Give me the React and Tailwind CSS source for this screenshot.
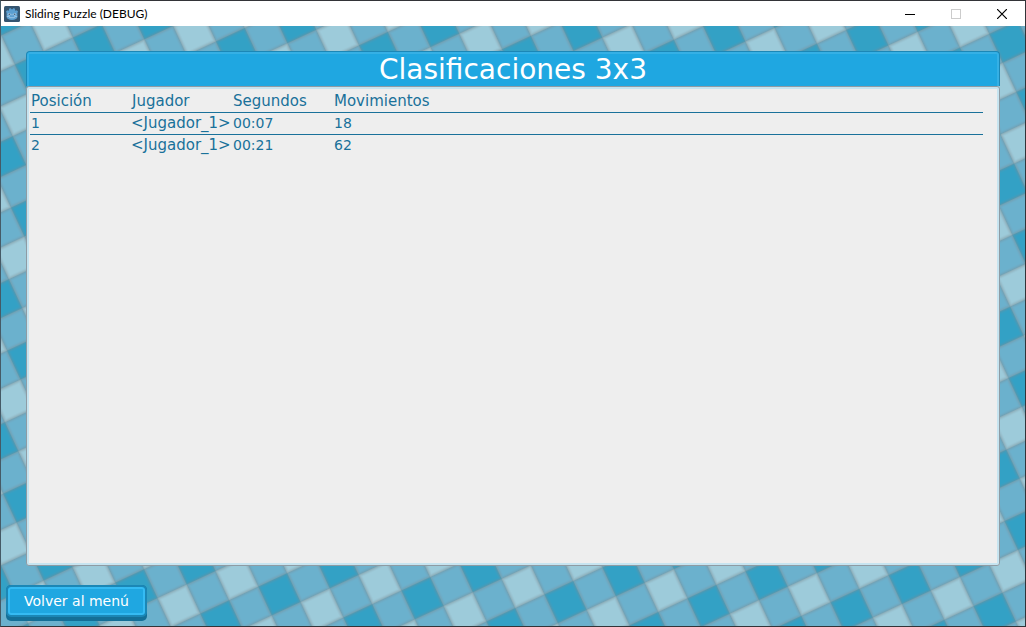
const rows = [
  { position: '1', player: '<Jugador_1>', time: '00:07', moves: '18' },
  { position: '2', player: '<Jugador_1>', time: '00:21', moves: '62' },
];

const columns = ['Posición', 'Jugador', 'Segundos', 'Movimientos'];

function CheckeredBackground() {
  const grid = 'M0 0H64M0 32H64M0 64H64M0 0V64M32 0V64M64 0V64';
  return (
    <svg className="absolute inset-0 h-full w-full" aria-hidden="true">
      <defs>
        <pattern
          id="checks"
          width="64"
          height="64"
          patternUnits="userSpaceOnUse"
          patternTransform="translate(357.7 549) rotate(-25)"
        >
          <rect width="64" height="64" fill="#6bb1cd" />
          <rect width="32" height="32" fill="#9dcbda" />
          <rect x="32" y="32" width="32" height="32" fill="#33a1c5" />
          <g fill="none" stroke="#7c8f96">
            <path d={grid} strokeWidth="6" opacity="0.08" />
            <path d={grid} strokeWidth="4" opacity="0.1" />
            <path d={grid} strokeWidth="2.4" opacity="0.16" />
            <path d={grid} strokeWidth="1" opacity="0.3" />
          </g>
        </pattern>
      </defs>
      <rect width="100%" height="100%" fill="url(#checks)" />
    </svg>
  );
}

function GodotIcon() {
  return (
    <svg className="h-4 w-4" viewBox="0 0 16 16" aria-hidden="true">
      <rect width="16" height="16" rx="1.5" fill="#355570" />
      <path
        d="M2 5.600 3.200 4.200 4.700 4.700 5.200 2.600 6.900 2.200 7.400 3.300h1.200L9.100 2.200l1.700.4.500 2.100 1.500-.5L14 5.600l-.6 1.400v4c0 1.700-2.400 2.900-5.400 2.900S2.600 12.700 2.600 11V7z"
        fill="#5b9fd2"
      />
      <path d="M2.800 10.300 5.600 10.700v1h4.800v-1l2.800-.4" fill="none" stroke="#a9cdea" strokeWidth=".8" />
      <circle cx="5.200" cy="8.300" r="1.400" fill="#a9cdea" />
      <circle cx="10.800" cy="8.300" r="1.400" fill="#a9cdea" />
      <circle cx="5.300" cy="8.300" r=".8" fill="#3c5a75" />
      <circle cx="10.700" cy="8.300" r=".8" fill="#3c5a75" />
      <path d="M8 7.800v1.600" stroke="#a9cdea" strokeWidth=".9" />
    </svg>
  );
}

function TitleBar() {
  return (
    <header className="flex h-[25px] items-center bg-white pl-[3px] text-black">
      <GodotIcon />
      <h1 className="ml-[5px] flex-1 font-['Lato','Open_Sans',sans-serif] text-[12px] leading-4">
        Sliding Puzzle (DEBUG)
      </h1>
      <div className="flex h-full">
        <button type="button" aria-label="Minimizar" className="flex w-[46px] items-center justify-center">
          <svg className="h-[10px] w-[10px]" viewBox="0 0 10 10">
            <path d="M0 5.500h10" stroke="#000" />
          </svg>
        </button>
        <button type="button" aria-label="Maximizar" disabled className="flex w-[46px] items-center justify-center">
          <svg className="h-[10px] w-[10px]" viewBox="0 0 10 10">
            <rect x=".5" y=".5" width="9" height="9" fill="none" stroke="#ccc" />
          </svg>
        </button>
        <button type="button" aria-label="Cerrar" className="flex w-[46px] items-center justify-center">
          <svg className="h-[10px] w-[10px]" viewBox="0 0 10 10">
            <path d="m0 0 10 10M10 0 0 10" stroke="#000" strokeWidth="1.200" />
          </svg>
        </button>
      </div>
    </header>
  );
}

function Leaderboard() {
  return (
    <section className="flex flex-1 flex-col">
      <h2 className="rounded-t-[4px] border border-b-0 border-[#1b87b6] bg-[#1fa7e1] pt-[2px] text-center text-[28px] leading-[32px] text-white shadow-[inset_0_2px_0_#35b0e5,inset_2px_0_0_#35b0e5,inset_-2px_0_0_#35b0e5]">
        Clasificaciones 3x3
      </h2>
      <div className="flex-1 rounded-[3px] border border-[#8f9ba3] bg-[#eee] pt-1 pr-4 pl-[3px] shadow-[inset_0_0_0_2px_#c6e4f0]">
        <table className="w-full table-fixed border-separate border-spacing-0 text-left text-[15px] leading-[21px] text-[#19719a]">
          <colgroup>
            <col className="w-[101px]" />
            <col className="w-[101px]" />
            <col className="w-[101px]" />
            <col />
          </colgroup>
          <thead>
            <tr>
              {columns.map((name) => (
                <th key={name} scope="col" className="border-b border-[#19719a] p-0 pl-px font-normal">
                  {name}
                </th>
              ))}
            </tr>
          </thead>
          <tbody className="[&>tr:not(:last-child)>td]:border-b [&>tr>td]:border-[#19719a]">
            {rows.map((row) => (
              <tr key={row.position}>
                <td className="p-0 pl-px text-[14px]">{row.position}</td>
                <td className="p-0 whitespace-nowrap">{row.player}</td>
                <td className="p-0 pl-px text-[14px]">{row.time}</td>
                <td className="p-0 pl-px text-[14px]">{row.moves}</td>
              </tr>
            ))}
          </tbody>
        </table>
      </div>
    </section>
  );
}

export default function App() {
  return (
    <div className="flex min-h-screen flex-col border border-[#333438] border-l-[#455a66] font-['DejaVu_Sans',sans-serif]">
      <TitleBar />
      <main className="relative flex flex-1 flex-col">
        <CheckeredBackground />
        <div className="relative flex flex-1 flex-col px-[25px] pt-[25px]">
          <Leaderboard />
        </div>
        <footer className="relative flex px-[5px] pt-[19px] pb-[5px]">
          <button
            type="button"
            className="rounded-[5px] bg-[#146f97] pb-1 text-[14px] leading-[24px] text-white"
          >
            <span className="block rounded-[5px] border-2 border-[#1b87b6] bg-[#1fa7e1] px-[16px] py-[2px] shadow-[inset_0_0_0_2px_#35bbf3]">
              Volver al menú
            </span>
          </button>
        </footer>
      </main>
    </div>
  );
}
